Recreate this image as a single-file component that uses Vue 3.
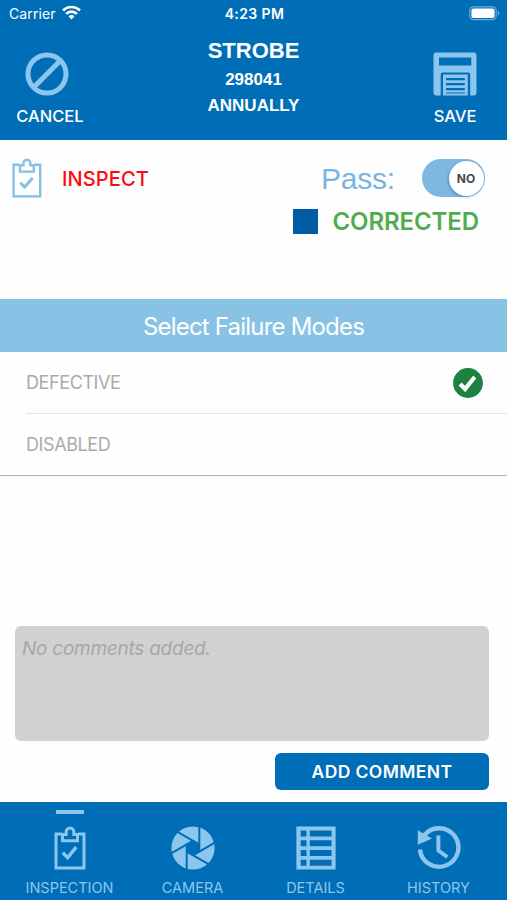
<script setup>
import { ref } from 'vue'

const modes = ref([
  { name: 'DEFECTIVE', selected: true },
  { name: 'DISABLED', selected: false }
])

const tabs = [
  { id: 'inspection', label: 'INSPECTION' },
  { id: 'camera', label: 'CAMERA' },
  { id: 'details', label: 'DETAILS' },
  { id: 'history', label: 'HISTORY' }
]
const activeTab = ref('inspection')
</script>

<template>
  <div class="screen">
    <header class="header">
      <div class="status">
        <div class="carrier">
          <span class="carrier-name">Carrier</span>
          <svg class="wifi" width="19" height="15" viewBox="0 0 19 15">
            <g fill="none" stroke="#fff" stroke-width="2.7">
              <path d="M1.1 5.5a11.8 11.8 0 0 1 16.8 0" />
              <path d="M4.1 8.9a7.6 7.6 0 0 1 10.8 0" />
            </g>
            <path d="M9.5 14.4 6.5 11.2a4.2 4.2 0 0 1 6 0z" fill="#fff" />
          </svg>
        </div>
        <span class="clock">4:23 PM</span>
        <svg class="battery" width="31" height="15" viewBox="0 0 31 15">
          <rect x="0.8" y="0.8" width="26.4" height="12.8" rx="3.6" fill="none" stroke="#69aedd" stroke-width="1.2" />
          <rect x="2.4" y="2.4" width="23.2" height="9.6" rx="2" fill="#fff" />
          <path d="M28.8 4.8c2 .8 2 4 0 4.8z" fill="#69aedd" />
        </svg>
      </div>
      <div class="bar">
        <button class="action cancel">
          <svg width="44" height="44" viewBox="0 0 44 44" fill="none" stroke="#8cc6ee" stroke-width="5">
            <circle cx="22" cy="22" r="19" />
            <path d="M8.8 35.2 35.2 8.8" />
          </svg>
          <span>CANCEL</span>
        </button>
        <div class="title">
          <h1>STROBE</h1>
          <p class="number">298041</p>
          <p class="period">ANNUALLY</p>
        </div>
        <button class="action save">
          <svg width="44" height="44" viewBox="0 0 44 44">
            <path fill="#8cc6ee" fill-rule="evenodd" d="M3.500.4h37a3 3 0 0 1 3 3v37a3 3 0 0 1-3 3H37.200V22.400a2 2 0 0 0-2-2H9.700a2 2 0 0 0-2 2v21h-4.200a3 3 0 0 1-3-3v-37a3 3 0 0 1 3-3zM6 5.500v8h32.300v-8z" />
            <path fill="#8cc6ee" fill-rule="evenodd" d="M10 22.600h24.800v20.800H10zM13 26v2.300h18.800v-2.300zM13 31v2.300h18.800v-2.300zM13 36v2.300h18.800v-2.300zM13 40.500v1.100h18.800v-1.100z" />
          </svg>
          <span>SAVE</span>
        </button>
      </div>
    </header>

    <main class="content">
      <section class="inspect">
        <svg class="clip" width="30" height="41" viewBox="0 0 30 41" fill="none" stroke="#84bfe6">
          <path stroke-width="2.400" d="M7.600 6.800H1.600V38.400H28.200V6.800H22.200" />
          <path stroke-width="2.400" d="M8 13.600V7.400h3.400V5.200a3.500 3.500 0 0 1 7 0v2.200h3.400v6.200z" />
          <path stroke-width="3" d="m8.400 24.800 4.200 4.200 8-9" />
        </svg>
        <span class="inspect-label">INSPECT</span>
        <span class="pass-label">Pass:</span>
        <div class="toggle"><span class="knob">NO</span></div>
      </section>

      <section class="corrected">
        <span class="box"></span>
        <span class="corrected-label">CORRECTED</span>
      </section>

      <h2 class="modes-title"><span>Select Failure Modes</span></h2>
      <ul class="modes">
        <li v-for="mode in modes" :key="mode.name" @click="mode.selected = !mode.selected">
          <span>{{ mode.name }}</span>
          <svg v-if="mode.selected" width="30" height="30" viewBox="0 0 30 30">
            <circle cx="15" cy="15" r="14.900" fill="#1b8240" />
            <path d="m7.100 16 5 5L21.700 9" fill="none" stroke="#fff" stroke-width="4.200" />
          </svg>
        </li>
      </ul>

      <section class="comments">
        <div class="comment-box"><span>No comments added.</span></div>
        <button class="add"><span>ADD COMMENT</span></button>
      </section>
    </main>

    <nav class="tabs">
      <button v-for="tab in tabs" :key="tab.id" class="tab" @click="activeTab = tab.id">
        <span class="marker" :class="{ active: tab.id === activeTab }"></span>
        <svg v-if="tab.id === 'inspection'" width="44" height="44" viewBox="0 0 44 44" fill="none" stroke="#8cc6ee">
          <path stroke-width="3" d="M14 8H8v34h28V8h-6" />
          <path stroke-width="3" d="M14.500 14.800V8.400h3.700V5.800a3.800 3.800 0 0 1 7.600 0v2.600h3.700v6.400z" />
          <path stroke-width="3.400" d="m14.800 26.600 4.800 5 8.600-10.400" />
        </svg>
        <svg v-else-if="tab.id === 'camera'" width="44" height="44" viewBox="0 0 44 44">
          <circle cx="22" cy="22" r="21.600" fill="#8cc6ee" />
          <path d="M28.800 18.100V25.900L22 29.900 15.200 25.900V18.100L22 14.100z" fill="#006eb6" />
          <g stroke="#006eb6" stroke-width="2">
            <path v-for="n in 6" :key="n" :transform="`rotate(${n * 60} 22 22)`" d="M28.300 0V25" />
          </g>
        </svg>
        <svg v-else-if="tab.id === 'details'" width="44" height="44" viewBox="0 0 44 44">
          <path fill="#8cc6ee" d="M2.400.5h39.200v43H2.400z" />
          <g v-for="n in 4" :key="n" :transform="`translate(0 ${(n - 1) * 9.700})`" fill="#006eb6">
            <path d="M6.700 4.600h5.800v6H6.700zM15.800 4.600h21.800v6H15.800z" />
          </g>
        </svg>
        <svg v-else width="44" height="44" viewBox="0 0 44 44">
          <path d="M7.300 9.100A19.300 19.300 0 1 1 2.900 23.500" fill="none" stroke="#8cc6ee" stroke-width="4.400" />
          <path d="M.8 4.200V18.700L15 12.400z" fill="#8cc6ee" />
          <path d="M21.400 9.400V24.500L30.300 31" fill="none" stroke="#8cc6ee" stroke-width="4" />
        </svg>
        <span class="tab-label">{{ tab.label }}</span>
      </button>
    </nav>
  </div>
</template>

<style>
body {
  background: #fff;
}
</style>

<style scoped>
* {
  box-sizing: border-box;
}
.screen {
  width: 507px;
  height: 900px;
  display: flex;
  flex-direction: column;
  overflow: hidden;
  background: #fefefe;
  font-family: Inter, "Liberation Sans", sans-serif;
  white-space: nowrap;
}
button {
  border: 0;
  padding: 0;
  background: none;
  font: inherit;
  color: inherit;
  display: flex;
  flex-direction: column;
  align-items: center;
}
h1, h2, p, ul {
  margin: 0;
  padding: 0;
}
svg {
  display: block;
  flex: none;
}
.header {
  height: 140px;
  flex: none;
  background: #006eb6;
  color: #fff;
}
.status {
  height: 28px;
  display: grid;
  grid-template-columns: 1fr auto 1fr;
  align-items: center;
  padding: 0 7px 0 9px;
  font-size: 13.500px;
  line-height: 28px;
}
.carrier {
  display: flex;
  align-items: center;
  gap: 6px;
}
.carrier-name {
  font-size: 14px;
  letter-spacing: 0.100px;
}
.wifi {
  margin-bottom: 3px;
}
.clock {
  font-size: 14px;
  font-weight: 600;
  letter-spacing: 0.400px;
}
.battery {
  justify-self: end;
  margin-bottom: 1px;
}
.bar {
  display: grid;
  grid-template-columns: 100px 1fr 104px;
}
.action {
  padding-top: 24px;
  font-size: 16.500px;
  font-weight: 500;
  line-height: 20px;
  gap: 10px;
}
.cancel svg {
  margin-right: 6px;
}
.title {
  padding-top: 8px;
  margin-left: 4px;
  text-align: center;
  font-family: "Liberation Sans", Arial, sans-serif;
  font-weight: 700;
}
.title h1 {
  font-size: 22px;
  line-height: 30px;
}
.number {
  font-size: 17px;
  line-height: 28px;
}
.period {
  font-size: 17px;
  line-height: 23px;
}
.content {
  flex: 1;
  display: flex;
  flex-direction: column;
}
.inspect {
  height: 67px;
  padding: 17px 22px 0 12px;
  display: flex;
  align-items: flex-start;
}
.clip {
  margin-top: 1px;
}
.inspect-label {
  margin-left: 20px;
  margin-right: auto;
  font-size: 20px;
  font-weight: 500;
  line-height: 44px;
  letter-spacing: 0.100px;
  color: #fb0a0e;
}
.pass-label {
  font-family: "Liberation Sans", Arial, sans-serif;
  font-size: 30px;
  line-height: 43px;
  letter-spacing: -0.200px;
  color: #78b5e1;
  margin-right: 27px;
}
.toggle {
  width: 63px;
  height: 38px;
  margin-top: 2px;
  padding: 1.500px;
  border-radius: 19px;
  background: #7cb8e2;
  display: flex;
  justify-content: flex-end;
}
.knob {
  width: 35px;
  height: 35px;
  border-radius: 50%;
  background: #fff;
  box-shadow: -1px 1px 3px rgba(0, 50, 90, 0.3);
  color: #484848;
  font-size: 12px;
  font-weight: 700;
  line-height: 36px;
  text-align: center;
}
.corrected {
  height: 92px;
  padding: 0 28px 0 0;
  display: flex;
  align-items: flex-start;
  justify-content: flex-end;
  gap: 15px;
}
.box {
  width: 25px;
  height: 25px;
  margin-top: 2px;
  background: #005ca3;
}
.corrected-label {
  font-size: 24px;
  font-weight: 600;
  line-height: 30px;
  letter-spacing: -0.100px;
  color: #50ad4e;
}
.modes-title {
  height: 53px;
  flex: none;
  background: #88c3e6;
  color: #fff;
  font-size: 24px;
  font-weight: 400;
  line-height: 55px;
  letter-spacing: -0.800px;
  text-align: center;
}
.modes {
  list-style: none;
  border-bottom: 1.500px solid #b3b3b3;
}
.modes li {
  height: 62px;
  margin-left: 26px;
  padding-right: 24px;
  display: flex;
  align-items: center;
  justify-content: space-between;
  border-bottom: 1px solid #e4e4e4;
  font-size: 18px;
  line-height: 24px;
  letter-spacing: -0.400px;
  color: #aaa;
}
.modes li span {
  padding-top: 1px;
}
.modes li:last-child {
  height: 61px;
  border-bottom: 0;
}
.comments {
  margin-top: auto;
  padding: 0 18px 12px 15px;
  display: flex;
  flex-direction: column;
  align-items: flex-end;
  gap: 12px;
}
.comment-box {
  width: 474px;
  height: 115px;
  padding: 12px 7px;
  border-radius: 6px;
  background: #d1d1d1;
  color: #a7a7a7;
  font-size: 19px;
  font-style: italic;
  line-height: 22px;
  letter-spacing: -0.250px;
}
.add {
  width: 214px;
  height: 37px;
  border-radius: 6px;
  background: #006eb6;
  color: #fff;
  font-size: 17.500px;
  font-weight: 600;
  line-height: 37px;
  letter-spacing: 0.400px;
}
.tabs {
  height: 98px;
  flex: none;
  padding: 0 7px 0 8px;
  display: grid;
  grid-template-columns: repeat(4, 1fr);
  background: #006eb6;
  color: #8cc6ee;
}
.marker {
  width: 28px;
  height: 4px;
  margin: 8px 0 12px;
}
.marker.active {
  background: #8cc6ee;
}
.tab-label {
  margin-top: 8px;
  font-size: 14.500px;
  line-height: 20px;
}
</style>
